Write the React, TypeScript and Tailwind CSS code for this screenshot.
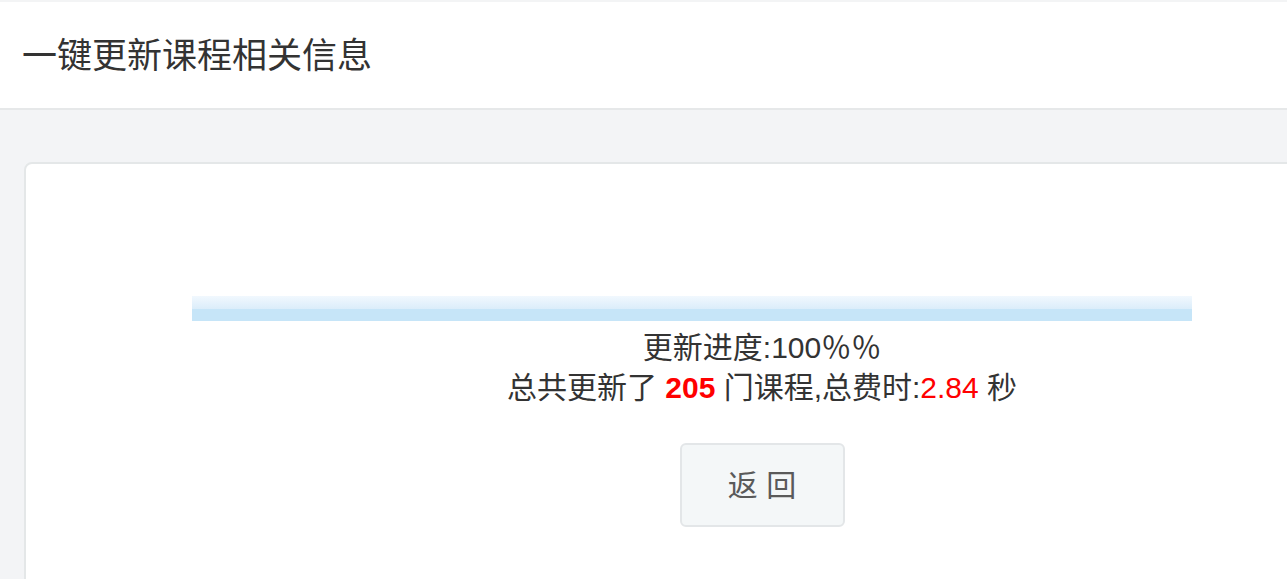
import React from "react";

const font = { fontFamily: '"Liberation Sans", "Noto Sans CJK SC", sans-serif' };

export default function App() {
  const total = 205;
  const seconds = "2.84";

  return (
    <div className="h-[579px] w-[1287px] overflow-hidden bg-[#f3f4f6]" style={font}>
      {/* 顶部标题 */}
      <div className="h-[110px] border-t-2 border-b-2 border-t-[#f3f4f5] border-b-[#e6e8e9] bg-white flex items-center pl-[22px]">
        <h1 className="text-[35px] text-[#333] leading-none">一键更新课程相关信息</h1>
      </div>

      <div className="pt-[52px] pl-6">
        <div className="w-[1476px] h-[460px] shrink-0 rounded-lg border-2 border-[#e4e7e8] bg-white pt-[132px]">
          {/* 进度条 */}
          <div className="ml-[166px] w-[1000px] h-[25px] flex flex-col">
            <div className="h-[13px] bg-gradient-to-b from-[#f1f8fe] to-[#dbedfa]" />
            <div className="h-[12px] bg-[#c6e5f8]" />
          </div>

          <div className="mt-[7px] text-center text-[30px] leading-[40px] text-[#333]">
            <p>更新进度:100％％</p>
            <p>
              总共更新了 <span className="font-bold text-[#ff0000]">{total}</span> 门课程,总费时:
              <span className="text-[#ff0000]">{seconds}</span> 秒
            </p>
          </div>

          <div className="mt-[35px] flex justify-center">
            <button className="w-[165px] h-[84px] rounded-md border-2 border-[#e3e6e8] bg-[#f4f7f8] text-[30px] text-[#5a5a5a]">
              返 回
            </button>
          </div>
        </div>
      </div>
    </div>
  );
}
